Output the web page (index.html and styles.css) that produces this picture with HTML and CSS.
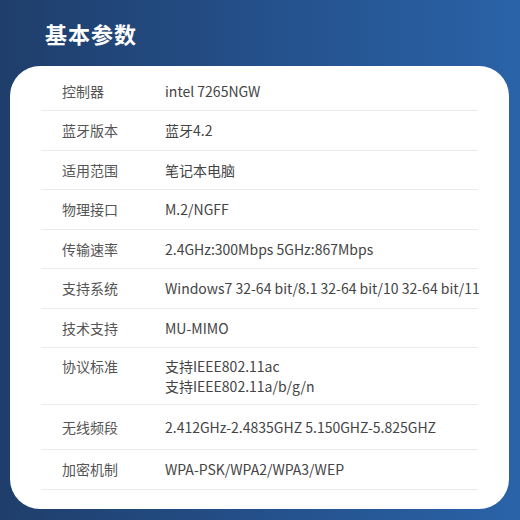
FILE: index.html
```html
<!DOCTYPE html>
<html lang="zh-CN">
<head>
  <meta charset="UTF-8" />
  <title>基本参数</title>
  <meta name="viewport" content="width=device-width, initial-scale=1" />
  <link rel="stylesheet" href="styles.css">
</head>
<body>
  <div class="page">
    <header class="page-head">
      <h1>基本参数</h1>
    </header>

    <div class="card">
      <div class="spec-row">
        <span class="spec-label">控制器</span>
        <span class="spec-value">intel 7265NGW</span>
      </div>
      <div class="spec-row">
        <span class="spec-label">蓝牙版本</span>
        <span class="spec-value">蓝牙4.2</span>
      </div>
      <div class="spec-row">
        <span class="spec-label">适用范围</span>
        <span class="spec-value">笔记本电脑</span>
      </div>
      <div class="spec-row">
        <span class="spec-label">物理接口</span>
        <span class="spec-value">M.2/NGFF</span>
      </div>
      <div class="spec-row">
        <span class="spec-label">传输速率</span>
        <span class="spec-value">2.4GHz:300Mbps 5GHz:867Mbps</span>
      </div>
      <div class="spec-row">
        <span class="spec-label">支持系统</span>
        <span class="spec-value">Windows7 32-64 bit/8.1 32-64 bit/10 32-64 bit/11</span>
      </div>
      <div class="spec-row">
        <span class="spec-label">技术支持</span>
        <span class="spec-value">MU-MIMO</span>
      </div>
      <div class="spec-row spec-row--multi">
        <span class="spec-label">协议标准</span>
        <span class="spec-value">支持IEEE802.11ac<br>支持IEEE802.11a/b/g/n</span>
      </div>
      <div class="spec-row spec-row--tall">
        <span class="spec-label">无线频段</span>
        <span class="spec-value">2.412GHz-2.4835GHZ 5.150GHZ-5.825GHZ</span>
      </div>
      <div class="spec-row">
        <span class="spec-label">加密机制</span>
        <span class="spec-value">WPA-PSK/WPA2/WPA3/WEP</span>
      </div>
    </div>
  </div>
</body>
</html>
```

FILE: styles.css
```css
* {
  box-sizing: border-box;
}
body {
  margin: 0;
  font-family: "Noto Sans CJK SC", "Noto Sans", sans-serif;
  background: linear-gradient(90deg, #1f3e6b 0%, #24508a 50%, #2a63a8 100%);
  min-height: 520px;
}
.page {
  width: 520px;
  height: 520px;
  overflow: hidden;
}
.page-head {
  height: 66px;
  display: flex;
  align-items: center;
  padding-left: 45px;
}
.page-head h1 {
  margin: 0;
  color: #fff;
  font-size: 22px;
  line-height: 22px;
  font-weight: 700;
  letter-spacing: 1px;
}
.card {
  margin: 0 11px 0 10px;
  background: #fff;
  border-radius: 30px;
  padding: 6px 31px 19px;
}
.spec-row {
  height: 39.5px;
  display: flex;
  align-items: center;
  padding-left: 21px;
  border-bottom: 1px solid #ebebeb;
  font-size: 14px;
  line-height: 20px;
  white-space: nowrap;
}
.spec-row:first-child {
  height: 39px;
}
.spec-row--multi {
  height: 57px;
  align-items: flex-start;
  padding-top: 8px;
}
.spec-row--tall {
  height: 45px;
}
.spec-label {
  width: 103px;
  flex-shrink: 0;
  color: #555;
}
.spec-value {
  color: #444;
}
```
